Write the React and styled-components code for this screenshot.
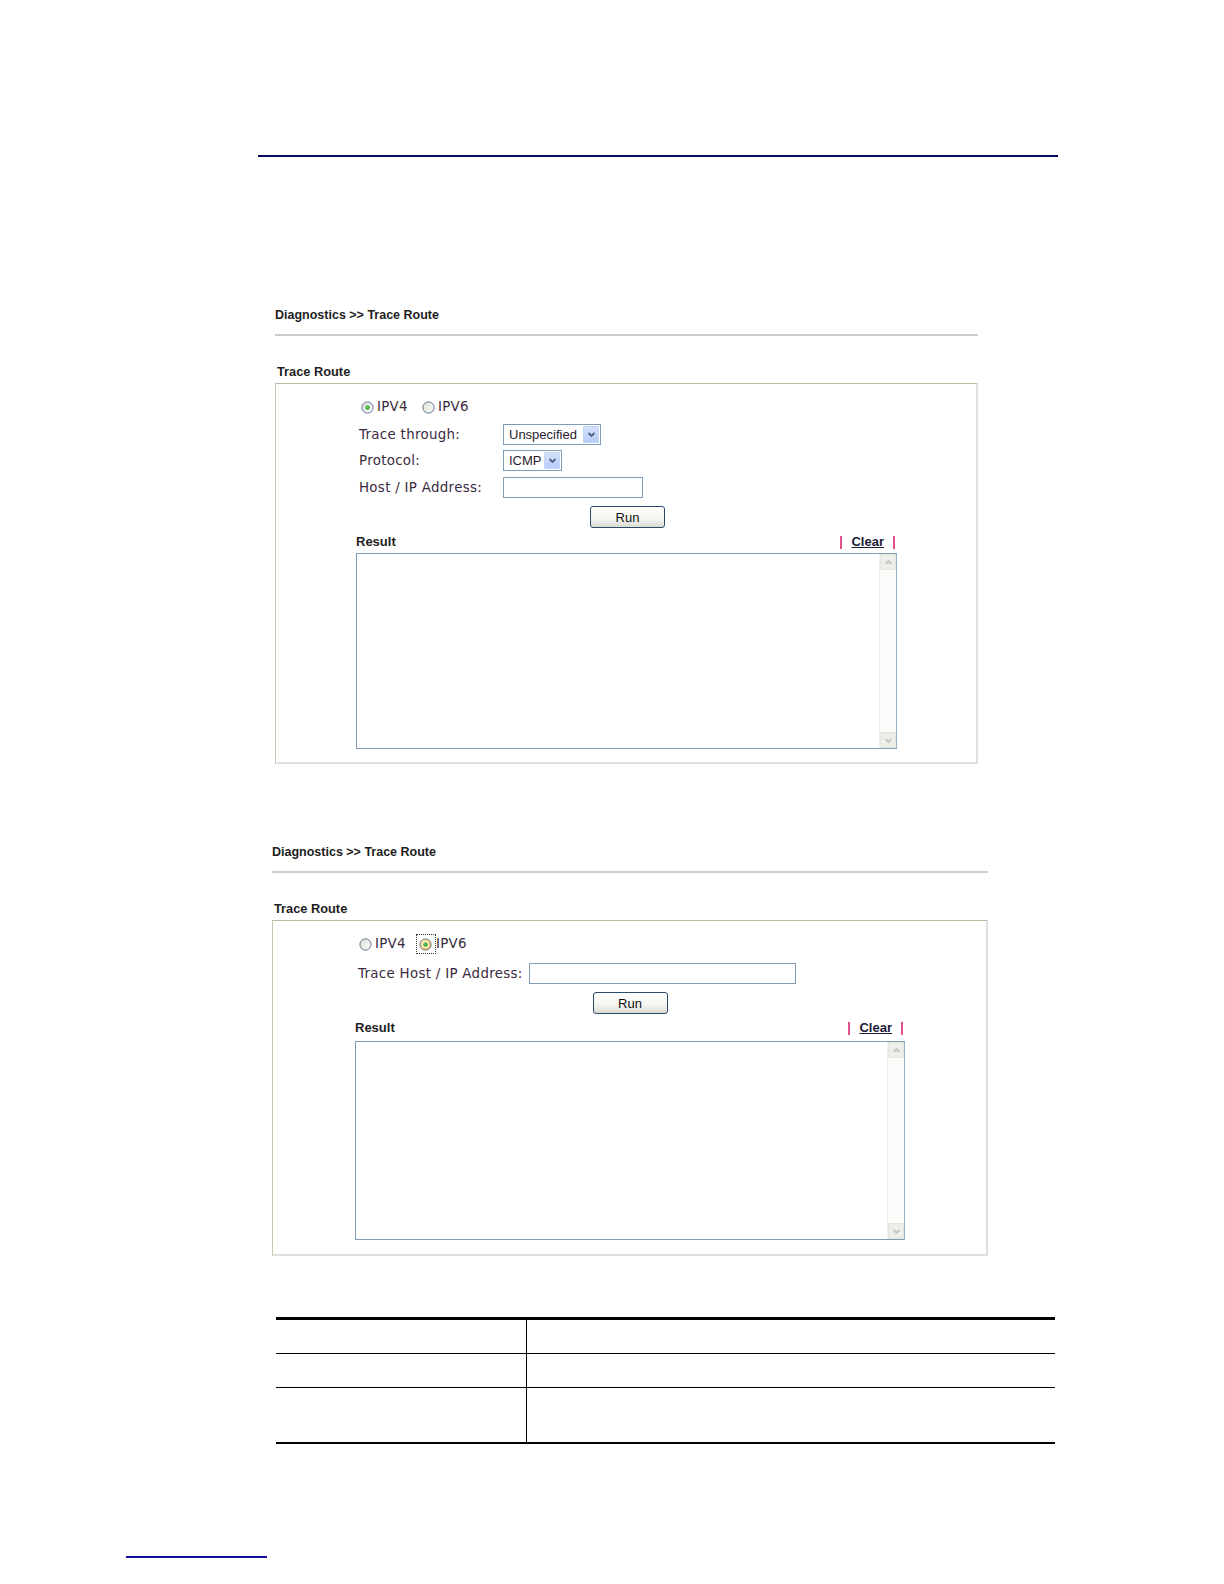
import styled, { createGlobalStyle } from "styled-components";

const GlobalStyle = createGlobalStyle`
  html, body {
    margin: 0;
    padding: 0;
    background: #ffffff;
    overflow: hidden;
  }
  * { box-sizing: border-box; }
`;

const Page = styled.div`
  width: 1224px;
  height: 1584px;
  padding-top: 155px;
  font-family: "Liberation Sans", Arial, sans-serif;
  overflow: hidden;
`;

const TopRule = styled.div`
  margin-left: 258px;
  width: 800px;
  border-top: 2px solid #0a0a5c;
`;

const Figure = styled.div`
  margin-left: ${p => p.left}px;
  margin-top: ${p => p.top}px;
  width: ${p => p.width}px;
`;

const Breadcrumb = styled.div`
  font-size: 12.5px;
  font-weight: bold;
  color: #1e1e1e;
  line-height: 16px;
  padding-bottom: 11px;
  border-bottom: 2px solid #cdcdcd;
`;

const PanelTitle = styled.div`
  margin-top: 28px;
  margin-bottom: 3px;
  padding-left: 2px;
  font-size: 12.8px;
  font-weight: bold;
  color: #1e1e1e;
  line-height: 16px;
`;

const Panel = styled.div`
  border-top: 1px solid #b9b9a2;
  border-left: 1px solid #c6c6b2;
  border-right: 2px solid #e0e0dc;
  border-bottom: 2px solid #e0e0dc;
  padding: ${p => p.pt}px 0 ${p => p.pb}px ${p => p.pl}px;
`;

const Form = styled.div`
  padding-left: 3px;
  font-family: "DejaVu Sans", Verdana, sans-serif;
  font-size: 13.4px;
  letter-spacing: 0.3px;
  color: #3a2a3e;
`;

const RadioRow = styled.div`
  display: flex;
  align-items: center;
  height: ${p => p.h}px;
`;

const RadioItem = styled.label`
  display: flex;
  align-items: center;
  margin-right: ${p => p.gap}px;
  margin-left: ${p => p.ml || 0}px;
`;

const FocusRing = styled.span`
  display: inline-flex;
  align-items: center;
  justify-content: center;
  width: 20px;
  height: 20px;
  border: 1px dotted #333;
`;

const RadioText = styled.span`
  margin-left: ${p => p.ml}px;
  line-height: 16px;
`;

const FieldRow = styled.div`
  display: flex;
  align-items: center;
  height: 21px;
  margin-top: ${p => p.mt}px;
`;

const FieldLabel = styled.div`
  width: ${p => (p.w ? `${p.w}px` : "auto")};
  margin-right: ${p => p.mr || 0}px;
  white-space: nowrap;
`;

const SelectBox = styled.div`
  display: flex;
  align-items: center;
  width: ${p => p.w}px;
  height: 21px;
  border: 1px solid #7f9db9;
  background: #fff;
  padding: 1px;
  font-family: "Liberation Sans", Arial, sans-serif;
  font-size: 13px;
  letter-spacing: 0;
  color: #2a1a30;
`;

const SelectText = styled.span`
  flex: 1;
  padding-left: 4px;
  white-space: nowrap;
`;

const SelectArrow = styled.span`
  display: flex;
  align-items: center;
  justify-content: center;
  width: 16px;
  height: 17px;
  background: linear-gradient(#d5e1fb, #b7ccf7);
  border: 1px solid #c2d3f8;
  border-radius: 1px;
`;

const TextInput = styled.div`
  width: ${p => p.w}px;
  height: 21px;
  border: 1px solid #7f9db9;
  background: #fff;
`;

const ButtonRow = styled.div`
  display: flex;
  justify-content: center;
  width: ${p => p.w}px;
  margin-top: 8px;
`;

const RunButton = styled.button`
  width: 75px;
  height: 22px;
  margin-left: ${p => p.shift || 0}px;
  padding: 0;
  border: 1px solid #2a4a6a;
  border-radius: 3px;
  background: linear-gradient(#ffffff 0%, #f4f4f0 60%, #dcdcd3 100%);
  font-family: "Liberation Sans", Arial, sans-serif;
  font-size: 13px;
  color: #111;
`;

const ResultHeader = styled.div`
  display: flex;
  justify-content: space-between;
  align-items: center;
  width: ${p => p.w}px;
  margin-top: 6px;
  line-height: 16px;
  font-size: 13px;
  font-weight: bold;
  color: #1e1e1e;
`;

const ClearLinks = styled.div`
  display: flex;
  align-items: center;
  gap: 9px;
  padding-right: 2px;
`;

const Bar = styled.span`
  display: inline-block;
  width: 2px;
  height: 13px;
  background: #e4508e;
`;

const ClearLink = styled.a`
  color: #1a1a36;
  text-decoration: underline;
  font-weight: bold;
`;

const ResultBox = styled.div`
  display: flex;
  justify-content: flex-end;
  width: ${p => p.w}px;
  height: ${p => p.h}px;
  margin-top: ${p => p.mt}px;
  border: 1px solid #7f9db9;
  border-right-color: #9cb0c8;
  background: #fff;
`;

const Scrollbar = styled.div`
  display: flex;
  flex-direction: column;
  justify-content: space-between;
  width: 17px;
  background: #fbfbf9;
  border-left: 1px solid #f0f0ec;
`;

const ScrollButton = styled.div`
  display: flex;
  align-items: center;
  justify-content: center;
  width: 16px;
  height: 16px;
  background: #efeee8;
  border: 1px solid #e6e5dd;
`;

const Table = styled.div`
  margin-left: 276px;
  margin-top: 61px;
  width: 779px;
  border-top: 3px solid #000;
`;

const TableRow = styled.div`
  display: flex;
  height: ${p => p.h}px;
  border-bottom: ${p => (p.last ? 2 : 1.5)}px solid #000;
`;

const KeyCell = styled.div`
  width: 251px;
  border-right: 1.5px solid #000;
`;

const ValueCell = styled.div`
  flex: 1;
`;

const FooterRule = styled.div`
  margin-left: 126px;
  margin-top: 112px;
  width: 141px;
  border-top: 2px solid #10109a;
`;

function Radio({ checked, hover }) {
  const id = hover ? "rgh" : "rg";
  return (
    <svg width="13" height="13" viewBox="0 0 13 13">
      <defs>
        <linearGradient id={id} x1="0" y1="0" x2="1" y2="1">
          <stop offset="0" stopColor={hover ? "#fce9a6" : "#dcdcd4"} />
          <stop offset="1" stopColor={hover ? "#f4b33a" : "#ffffff"} />
        </linearGradient>
      </defs>
      <circle cx="6.5" cy="6.5" r="5.6" fill={`url(#${id})`} stroke="#5e7590" strokeWidth="1" />
      {hover && <circle cx="6.5" cy="6.5" r="3.6" fill="#fff6d8" />}
      {checked && <circle cx="6.5" cy="6.5" r="2.3" fill="#3aa83a" />}
      {checked && <circle cx="6" cy="6" r="0.8" fill="#9be39b" />}
    </svg>
  );
}

function Chevron({ up, color = "#4d6185", size = 9 }) {
  return (
    <svg width={size} height={size} viewBox="0 0 9 9">
      <path
        d={up ? "M1.5 6 L4.5 3 L7.5 6" : "M1.5 3 L4.5 6 L7.5 3"}
        fill="none"
        stroke={color}
        strokeWidth="1.8"
      />
    </svg>
  );
}

function Select({ value, w }) {
  return (
    <SelectBox w={w}>
      <SelectText>{value}</SelectText>
      <SelectArrow>
        <Chevron />
      </SelectArrow>
    </SelectBox>
  );
}

function Result({ w, h, mt }) {
  return (
    <>
      <ResultHeader w={w}>
        <span>Result</span>
        <ClearLinks>
          <Bar />
          <ClearLink href="#">Clear</ClearLink>
          <Bar />
        </ClearLinks>
      </ResultHeader>
      <ResultBox w={w} h={h} mt={mt}>
        <Scrollbar>
          <ScrollButton>
            <Chevron up color="#c6c6bc" />
          </ScrollButton>
          <ScrollButton>
            <Chevron color="#c6c6bc" />
          </ScrollButton>
        </Scrollbar>
      </ResultBox>
    </>
  );
}

export default function App() {
  return (
    <Page>
      <GlobalStyle />
      <TopRule />

      <Figure left={275} top={150} width={703}>
        <Breadcrumb>Diagnostics &gt;&gt; Trace Route</Breadcrumb>
        <PanelTitle>Trace Route</PanelTitle>
        <Panel pt={14} pb={13} pl={80}>
          <Form>
            <RadioRow h={18}>
              <RadioItem gap={14} ml={2}>
                <Radio checked />
                <RadioText ml={3}>IPV4</RadioText>
              </RadioItem>
              <RadioItem gap={0}>
                <Radio />
                <RadioText ml={3}>IPV6</RadioText>
              </RadioItem>
            </RadioRow>
            <FieldRow mt={8}>
              <FieldLabel w={144}>Trace through:</FieldLabel>
              <Select value="Unspecified" w={98} />
            </FieldRow>
            <FieldRow mt={5}>
              <FieldLabel w={144}>Protocol:</FieldLabel>
              <Select value="ICMP" w={59} />
            </FieldRow>
            <FieldRow mt={6}>
              <FieldLabel w={144}>Host / IP Address:</FieldLabel>
              <TextInput w={140} />
            </FieldRow>
          </Form>
          <ButtonRow w={541}>
            <RunButton shift={2}>Run</RunButton>
          </ButtonRow>
          <Result w={541} h={196} mt={3} />
        </Panel>
      </Figure>

      <Figure left={272} top={80} width={716}>
        <Breadcrumb>Diagnostics &gt;&gt; Trace Route</Breadcrumb>
        <PanelTitle>Trace Route</PanelTitle>
        <Panel pt={13} pb={14} pl={82}>
          <Form>
            <RadioRow h={20}>
              <RadioItem gap={10} ml={1}>
                <Radio />
                <RadioText ml={3}>IPV4</RadioText>
              </RadioItem>
              <RadioItem gap={0}>
                <FocusRing>
                  <Radio checked hover />
                </FocusRing>
                <RadioText ml={0}>IPV6</RadioText>
              </RadioItem>
            </RadioRow>
            <FieldRow mt={9}>
              <FieldLabel mr={6}>Trace Host / IP Address:</FieldLabel>
              <TextInput w={267} />
            </FieldRow>
          </Form>
          <ButtonRow w={550}>
            <RunButton shift={0}>Run</RunButton>
          </ButtonRow>
          <Result w={550} h={199} mt={5} />
        </Panel>
      </Figure>

      <Table>
        <TableRow h={34}>
          <KeyCell />
          <ValueCell />
        </TableRow>
        <TableRow h={34}>
          <KeyCell />
          <ValueCell />
        </TableRow>
        <TableRow h={56} last>
          <KeyCell />
          <ValueCell />
        </TableRow>
      </Table>

      <FooterRule />
    </Page>
  );
}
